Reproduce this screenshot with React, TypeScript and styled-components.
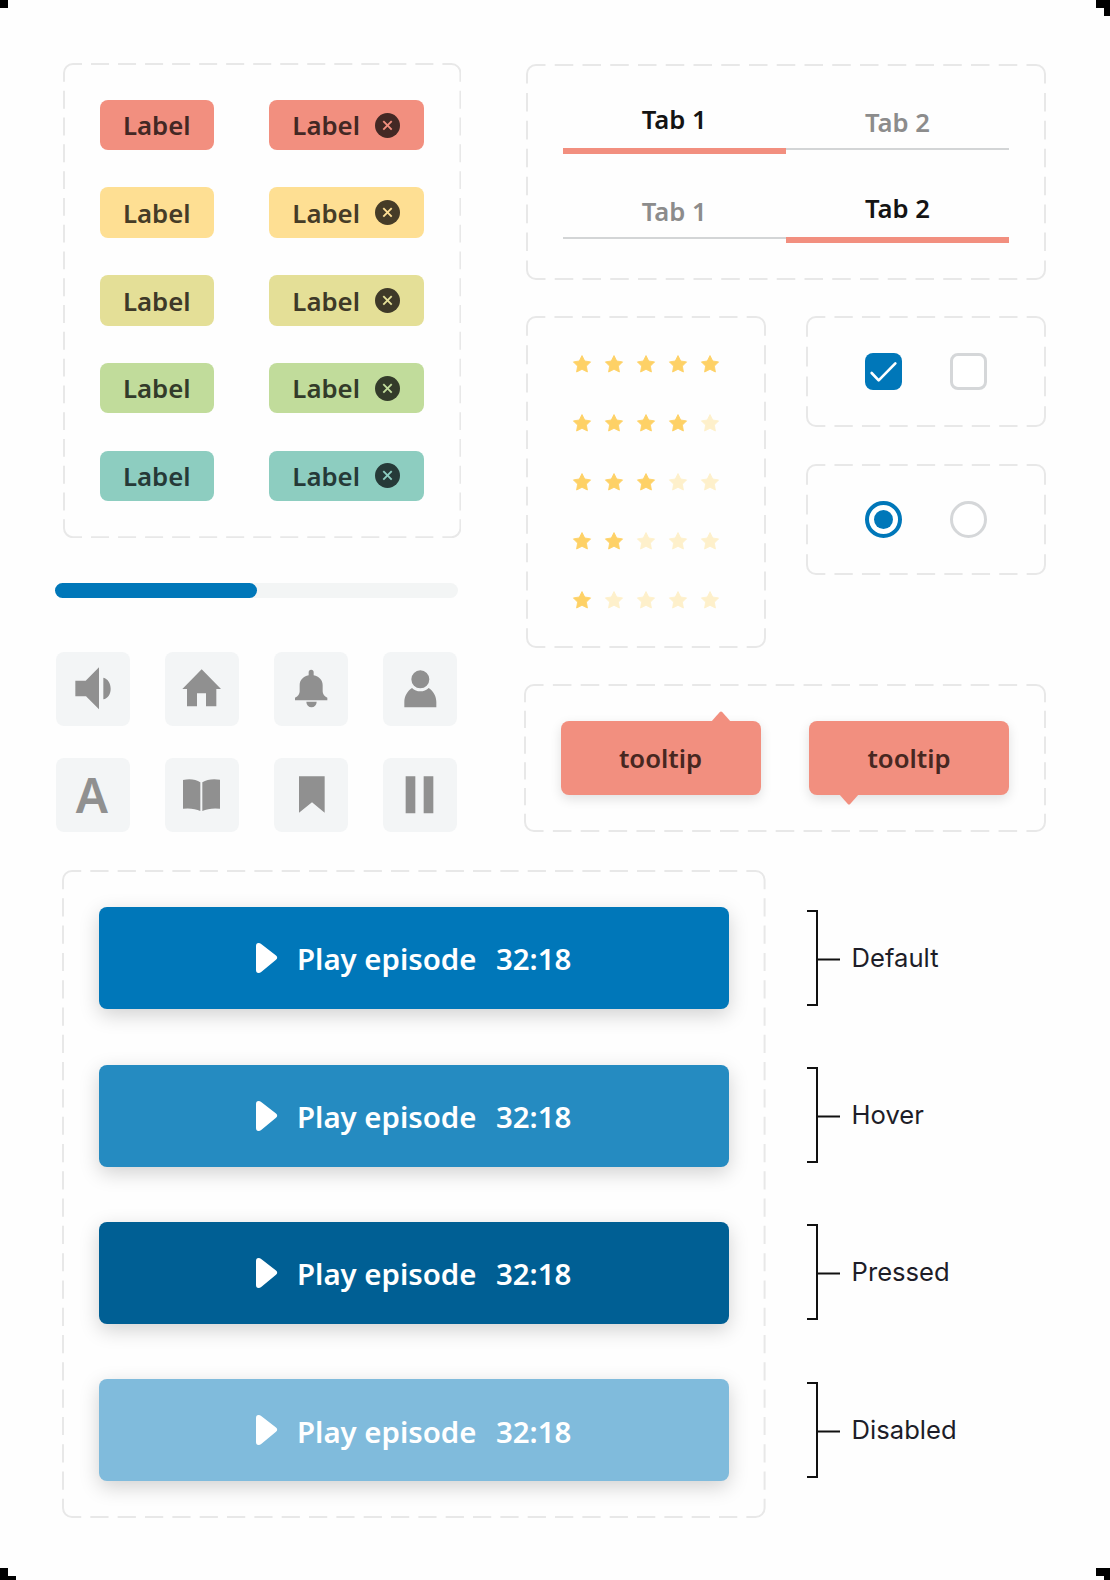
import React from "react";
import styled, { createGlobalStyle } from "styled-components";

const GlobalStyle = createGlobalStyle`
  *, *::before, *::after { box-sizing: border-box; }
  html, body { margin: 0; padding: 0; background: #fefefe; }
  body { font-family: "Noto Sans", "Open Sans", sans-serif; }
  button { font: inherit; border: 0; padding: 0; margin: 0; }
`;

const Page = styled.main`
  position: relative;
  display: flex;
  flex-direction: column;
  gap: 36.5px;
  width: 1110px;
  height: 1580px;
  padding: 63px 64.5px 0 55px;
  overflow: hidden;
  background: #fefefe;
`;

const CornerMark = styled.span<{ $x: number; $y: number; $w: number; $h: number }>`
  position: absolute;
  left: ${(p) => p.$x}px;
  top: ${(p) => p.$y}px;
  width: ${(p) => p.$w}px;
  height: ${(p) => p.$h}px;
  background: #000;
`;

const Upper = styled.div`
  display: flex;
  justify-content: space-between;
  height: 770px;
`;

const LeftColumn = styled.div`
  display: flex;
  flex-direction: column;
  width: 403px;
`;

const RightColumn = styled.div`
  display: flex;
  flex-direction: column;
  align-items: flex-end;
  width: 522px;
  padding-top: 0.5px;
  gap: 36px;
`;

const Panel = styled.section<{ $w: number; $h: number }>`
  position: relative;
  flex: none;
  width: ${(p) => p.$w}px;
  height: ${(p) => p.$h}px;
`;

const Outline = styled.svg`
  position: absolute;
  inset: 0;
  pointer-events: none;
`;

/* Dashes are distributed per side, so every corner is a full rounded dash. */
function sidePattern(length: number) {
  const count = Math.round((length / 9.1 - 5) / 3);
  const unit = length / (3 * count + 5);
  return { unit, array: `${unit * 2} ${unit}` };
}

function DashedPanel({ w, h, className, children }: { w: number; h: number; className?: string; children: React.ReactNode }) {
  const iw = w - 2;
  const ih = h - 2;
  const r = 9;
  const px = sidePattern(iw);
  const py = sidePattern(ih);
  const cx = px.unit * 2;
  const cy = py.unit * 2;
  const R = iw + 1;
  const B = ih + 1;
  return (
    <Panel $w={w} $h={h} className={className}>
      <Outline width={w} height={h} fill="none" stroke="#e8e8e8" strokeWidth={2}>
        <path d={`M1 ${1 + cy}V${1 + r}A${r} ${r} 0 0 1 ${1 + r} 1H${1 + cx}`} />
        <path d={`M${R - cx} 1H${R - r}A${r} ${r} 0 0 1 ${R} ${1 + r}V${1 + cy}`} />
        <path d={`M${R} ${B - cy}V${B - r}A${r} ${r} 0 0 1 ${R - r} ${B}H${R - cx}`} />
        <path d={`M${1 + cx} ${B}H${1 + r}A${r} ${r} 0 0 1 1 ${B - r}V${B - cy}`} />
        <g strokeDasharray={px.array}>
          <path d={`M${1 + cx + px.unit} 1H${R - cx - px.unit}`} />
          <path d={`M${1 + cx + px.unit} ${B}H${R - cx - px.unit}`} />
        </g>
        <g strokeDasharray={py.array}>
          <path d={`M1 ${1 + cy + py.unit}V${B - cy - py.unit}`} />
          <path d={`M${R} ${1 + cy + py.unit}V${B - cy - py.unit}`} />
        </g>
      </Outline>
      {children}
    </Panel>
  );
}

/* Chips */

const ChipPanel = styled(DashedPanel)`
  display: flex;
  flex-direction: column;
  gap: 37.1px;
  margin-left: 7.6px;
  padding: 36.8px 36.8px 0 37px;
`;

const ChipRow = styled.div`
  display: flex;
  justify-content: space-between;
`;

const Chip = styled.span<{ $bg: string; $fg: string; $wide?: boolean }>`
  display: inline-flex;
  align-items: center;
  gap: 15px;
  width: ${(p) => (p.$wide ? 155.2 : 114)}px;
  height: 50.6px;
  padding-left: 23.3px;
  border-radius: 8px;
  background: ${(p) => p.$bg};
  color: ${(p) => p.$fg};
  font-size: 25.8px;
  font-weight: 600;
  line-height: 50px;
`;

const ChipText = styled.span`
  width: 67.4px;
  white-space: nowrap;
  padding-top: 0.6px;
`;

const CHIPS = [
  { bg: "#f28f7f", fg: "#432824" },
  { bg: "#fedf93", fg: "#463c27" },
  { bg: "#e4df97", fg: "#3e3928" },
  { bg: "#c1dc9b", fg: "#333b2a" },
  { bg: "#8dcdc0", fg: "#263a38" },
];

function RemoveIcon({ bg, fg }: { bg: string; fg: string }) {
  return (
    <svg width="25" height="25" viewBox="0 0 25 25">
      <circle cx="12.5" cy="12.5" r="12.5" fill={fg} />
      <path d="M8.3 8.2l8.4 8.4M16.7 8.2l-8.4 8.4" stroke={bg} strokeWidth="1.9" />
    </svg>
  );
}

/* Progress */

const ProgressTrack = styled.div`
  height: 15px;
  margin-top: 45px;
  border-radius: 8px;
  background: #f3f5f5;
`;

const ProgressFill = styled.div`
  width: 50.1%;
  height: 100%;
  border-radius: 8px;
  background: #0077b9;
`;

/* Icon tiles */

const IconGrid = styled.div`
  display: grid;
  grid-template-columns: repeat(4, 74px);
  justify-content: space-between;
  row-gap: 32.8px;
  margin-top: 53.6px;
  padding: 0 0.6px 0 0.6px;
`;

const IconTile = styled.div`
  display: flex;
  align-items: center;
  justify-content: center;
  width: 74px;
  height: 73.8px;
  border-radius: 8px;
  background: #f3f5f6;
  color: #909090;
`;

const LetterIcon = styled.span`
  font-size: 48px;
  font-weight: 600;
  line-height: 74px;
  transform: translateX(-0.8px);
`;

const GLYPHS = [
  <path key="v" d="M58 86H89L129 46V172L90 133H58ZM142 77C156 80 164 94 164 110S156 139 142 142Z" />,
  <path key="h" d="M110 52L168 111H154V163H123V124H96V163H66V111H52Z" />,
  <path
    key="b"
    d="M63 145V137Q77 131 77 118V100C77 84 88 73 104 70V61a7.5 7.5 0 0 1 15 0V70C135 73 146 84 146 100V118Q146 131 160 137V145ZM97 149H128A15.5 17 0 0 1 97 149Z"
  />,
  <path
    key="p"
    d="M85 82a27 27 0 1 0 54 0a27 27 0 1 0 -54 0ZM87 108A36 36 0 0 0 137 108C152 118 160 134 160 150V166H64V150C64 134 72 118 87 108Z"
  />,
  null,
  <path key="o" d="M54 66Q86 60 106 73V159Q86 149 54 152ZM112 73Q132 60 165 65V152Q132 149 112 159Z" />,
  <path key="m" d="M75 55H152V164L114 133L75 164Z" />,
  <path key="s" d="M68 55H97V166H68ZM122 55H151V166H122Z" />,
];

/* Tabs */

const TabPanel = styled(DashedPanel)`
  display: flex;
  flex-direction: column;
  gap: 23.7px;
  padding: 24px 36.5px 0 37.2px;
`;

const TabBar = styled.div`
  display: grid;
  grid-template-columns: 1fr 1fr;
  height: 66px;
`;

const Tab = styled.button<{ $active?: boolean }>`
  display: flex;
  align-items: flex-end;
  justify-content: center;
  height: ${(p) => (p.$active ? 66 : 62)}px;
  padding-bottom: ${(p) => (p.$active ? 10 : 7)}px;
  border-bottom: ${(p) => (p.$active ? "6px solid #f28f7f" : "2px solid #d3d5d6")};
  background: none;
  color: ${(p) => (p.$active ? "#141414" : "#8c8c8c")};
  font-size: 25.7px;
  font-weight: 600;
  line-height: 36px;
`;

/* Ratings and selection controls */

const Middle = styled.div`
  display: flex;
  justify-content: space-between;
  align-items: flex-start;
  width: 520px;
`;

const RatingPanel = styled(DashedPanel)`
  display: flex;
  flex-direction: column;
  gap: 39.1px;
  padding: 38px 46px;
`;

const Rating = styled.div`
  display: flex;
  gap: 12px;
  height: 20px;
`;

function Star({ on }: { on: boolean }) {
  return (
    <svg width="20" height="20" viewBox="0 0 20 20">
      <path
        d="M10 1.6L12.7 7L18.6 7.9L14.4 12.1L15.4 18L10 15.3L4.6 18L5.6 12.1L1.4 7.9L7.3 7Z"
        fill={on ? "#fed166" : "#fef0cb"}
        stroke={on ? "#fed166" : "#fef0cb"}
        strokeWidth="0.9"
        strokeLinejoin="round"
      />
    </svg>
  );
}

const Controls = styled.div`
  display: flex;
  flex-direction: column;
  gap: 37px;
`;

const ControlPanel = styled(DashedPanel)`
  display: flex;
  align-items: center;
  justify-content: center;
  gap: 48px;
`;

const Checkbox = styled.span<{ $checked?: boolean }>`
  display: block;
  width: 37px;
  height: 37px;
  border: ${(p) => (p.$checked ? "0" : "3px solid #d5d7d9")};
  border-radius: 8px;
  background: ${(p) => (p.$checked ? "#0077b9" : "#fff")};
`;

const Radio = styled.span<{ $checked?: boolean }>`
  display: flex;
  align-items: center;
  justify-content: center;
  width: 37px;
  height: 37px;
  border: ${(p) => (p.$checked ? "4px solid #0077b9" : "3px solid #d5d7d9")};
  border-radius: 50%;
  background: #fff;
`;

const RadioDot = styled.span`
  width: 19px;
  height: 19px;
  border-radius: 50%;
  background: #0077b9;
`;

/* Tooltips */

const TooltipPanel = styled(DashedPanel)`
  display: flex;
  justify-content: space-between;
  align-items: center;
  padding: 0 36.5px 0 37px;
`;

const Tooltip = styled.div`
  position: relative;
  width: 200px;
  height: 74px;
  border-radius: 8px;
  background: #f28f7f;
  color: #472721;
  font-size: 25.7px;
  font-weight: 600;
  line-height: 76px;
  text-align: center;
  box-shadow: 0 4px 12px rgba(0, 0, 0, 0.12);
`;

const Pointer = styled.svg<{ $side: "top" | "bottom" }>`
  position: absolute;
  left: ${(p) => (p.$side === "top" ? 150 : 30)}px;
  top: ${(p) => (p.$side === "top" ? -10 : 73)}px;
  transform: ${(p) => (p.$side === "top" ? "none" : "rotate(180deg)")};
`;

/* Buttons */

const Lower = styled.div`
  display: flex;
  gap: 41.5px;
  padding-left: 7px;
`;

const ButtonPanel = styled(DashedPanel)`
  display: flex;
  flex-direction: column;
  gap: 55.4px;
  padding: 37.8px 37px 0;
`;

const PlayButton = styled.button<{ $bg: string }>`
  display: flex;
  align-items: center;
  width: 630px;
  height: 102px;
  padding-left: 156px;
  border-radius: 8px;
  background: ${(p) => p.$bg};
  box-shadow: 0 6px 20px rgba(0, 0, 0, 0.18);
  color: #fff;
  font-size: 29.4px;
  font-weight: 600;
  line-height: 40px;
  white-space: nowrap;
`;

const PlayGlyph = styled.svg`
  flex: none;
  margin-right: 19px;
`;

const PlayLabel = styled.span`
  width: 199px;
  text-align: left;
  padding-top: 2.4px;
`;

const PlayTime = styled.span`
  padding-top: 2.4px;
`;

const StateList = styled.div`
  display: flex;
  flex-direction: column;
  gap: 60.8px;
  padding-top: 40px;
`;

const StateRow = styled.div`
  display: flex;
  align-items: center;
  gap: 11.5px;
  height: 96.5px;
  color: #1d1d28;
  font-family: Inter, sans-serif;
  font-size: 25.6px;
  line-height: 32px;
`;

const STATES = [
  { name: "Default", bg: "#0077b9" },
  { name: "Hover", bg: "#258bc1" },
  { name: "Pressed", bg: "#005f94" },
  { name: "Disabled", bg: "#80bbdc" },
];

export default function App() {
  return (
    <>
      <GlobalStyle />
      <Page>
        <CornerMark $x={0} $y={0} $w={8} $h={8} />
        <CornerMark $x={1096} $y={0} $w={14} $h={8} />
        <CornerMark $x={1104} $y={8} $w={6} $h={8} />
        <CornerMark $x={0} $y={1568} $w={8} $h={12} />
        <CornerMark $x={8} $y={1576} $w={8} $h={4} />
        <CornerMark $x={1096} $y={1568} $w={14} $h={8} />
        <CornerMark $x={1104} $y={1576} $w={6} $h={4} />

        <Upper>
          <LeftColumn>
            <ChipPanel w={398.4} h={475.2}>
              {CHIPS.map((c) => (
                <ChipRow key={c.bg}>
                  <Chip $bg={c.bg} $fg={c.fg}>
                    <ChipText>Label</ChipText>
                  </Chip>
                  <Chip $bg={c.bg} $fg={c.fg} $wide>
                    <ChipText>Label</ChipText>
                    <RemoveIcon bg={c.bg} fg={c.fg} />
                  </Chip>
                </ChipRow>
              ))}
            </ChipPanel>
            <ProgressTrack>
              <ProgressFill />
            </ProgressTrack>
            <IconGrid>
              {GLYPHS.map((glyph, i) => (
                <IconTile key={i}>
                  {glyph ? (
                    <svg width="74" height="74" viewBox="0 0 222 222" fill="currentColor">
                      {glyph}
                    </svg>
                  ) : (
                    <LetterIcon>A</LetterIcon>
                  )}
                </IconTile>
              ))}
            </IconGrid>
          </LeftColumn>

          <RightColumn>
            <TabPanel w={520} h={216}>
              <TabBar>
                <Tab $active>Tab 1</Tab>
                <Tab>Tab 2</Tab>
              </TabBar>
              <TabBar>
                <Tab>Tab 1</Tab>
                <Tab $active>Tab 2</Tab>
              </TabBar>
            </TabPanel>
            <Middle>
              <RatingPanel w={240} h={332}>
                {[5, 4, 3, 2, 1].map((score) => (
                  <Rating key={score}>
                    {[1, 2, 3, 4, 5].map((n) => (
                      <Star key={n} on={n <= score} />
                    ))}
                  </Rating>
                ))}
              </RatingPanel>
              <Controls>
                <ControlPanel w={240} h={111}>
                  <Checkbox $checked>
                    <svg width="37" height="37" viewBox="0 0 111 111" fill="none">
                      <path d="M20 60L41 82L91 31" stroke="#fff" strokeWidth="8" strokeLinecap="round" strokeLinejoin="round" />
                    </svg>
                  </Checkbox>
                  <Checkbox />
                </ControlPanel>
                <ControlPanel w={240} h={111}>
                  <Radio $checked>
                    <RadioDot />
                  </Radio>
                  <Radio />
                </ControlPanel>
              </Controls>
            </Middle>
            <TooltipPanel w={522} h={148}>
              <Tooltip>
                <Pointer $side="top" width="20" height="11" viewBox="0 0 20 11">
                  <path d="M0 11L8.8 1Q10 0 11.2 1L20 11Z" fill="#f28f7f" />
                </Pointer>
                tooltip
              </Tooltip>
              <Tooltip>
                <Pointer $side="bottom" width="20" height="11" viewBox="0 0 20 11">
                  <path d="M0 11L8.8 1Q10 0 11.2 1L20 11Z" fill="#f28f7f" />
                </Pointer>
                tooltip
              </Tooltip>
            </TooltipPanel>
          </RightColumn>
        </Upper>

        <Lower>
          <ButtonPanel w={703.6} h={648}>
            {STATES.map((s) => (
              <PlayButton key={s.name} $bg={s.bg}>
                <PlayGlyph width="23" height="32" viewBox="0 0 23 32">
                  <path
                    d="M1 4Q1 1 3.5 1Q5 1 6.5 2.3L21 13.6Q23.4 15.7 21 17.8L6.5 29.7Q5 31 3.5 31Q1 31 1 28Z"
                    fill="#fff"
                  />
                </PlayGlyph>
                <PlayLabel>Play episode</PlayLabel>
                <PlayTime>32:18</PlayTime>
              </PlayButton>
            ))}
          </ButtonPanel>
          <StateList>
            {STATES.map((s) => (
              <StateRow key={s.name}>
                <svg width="33" height="96" viewBox="0 0 33 96" fill="none" stroke="#111" strokeWidth="2">
                  <path d="M0 1H10V95H0M10 49.5H33" />
                </svg>
                <span>{s.name}</span>
              </StateRow>
            ))}
          </StateList>
        </Lower>
      </Page>
    </>
  );
}
